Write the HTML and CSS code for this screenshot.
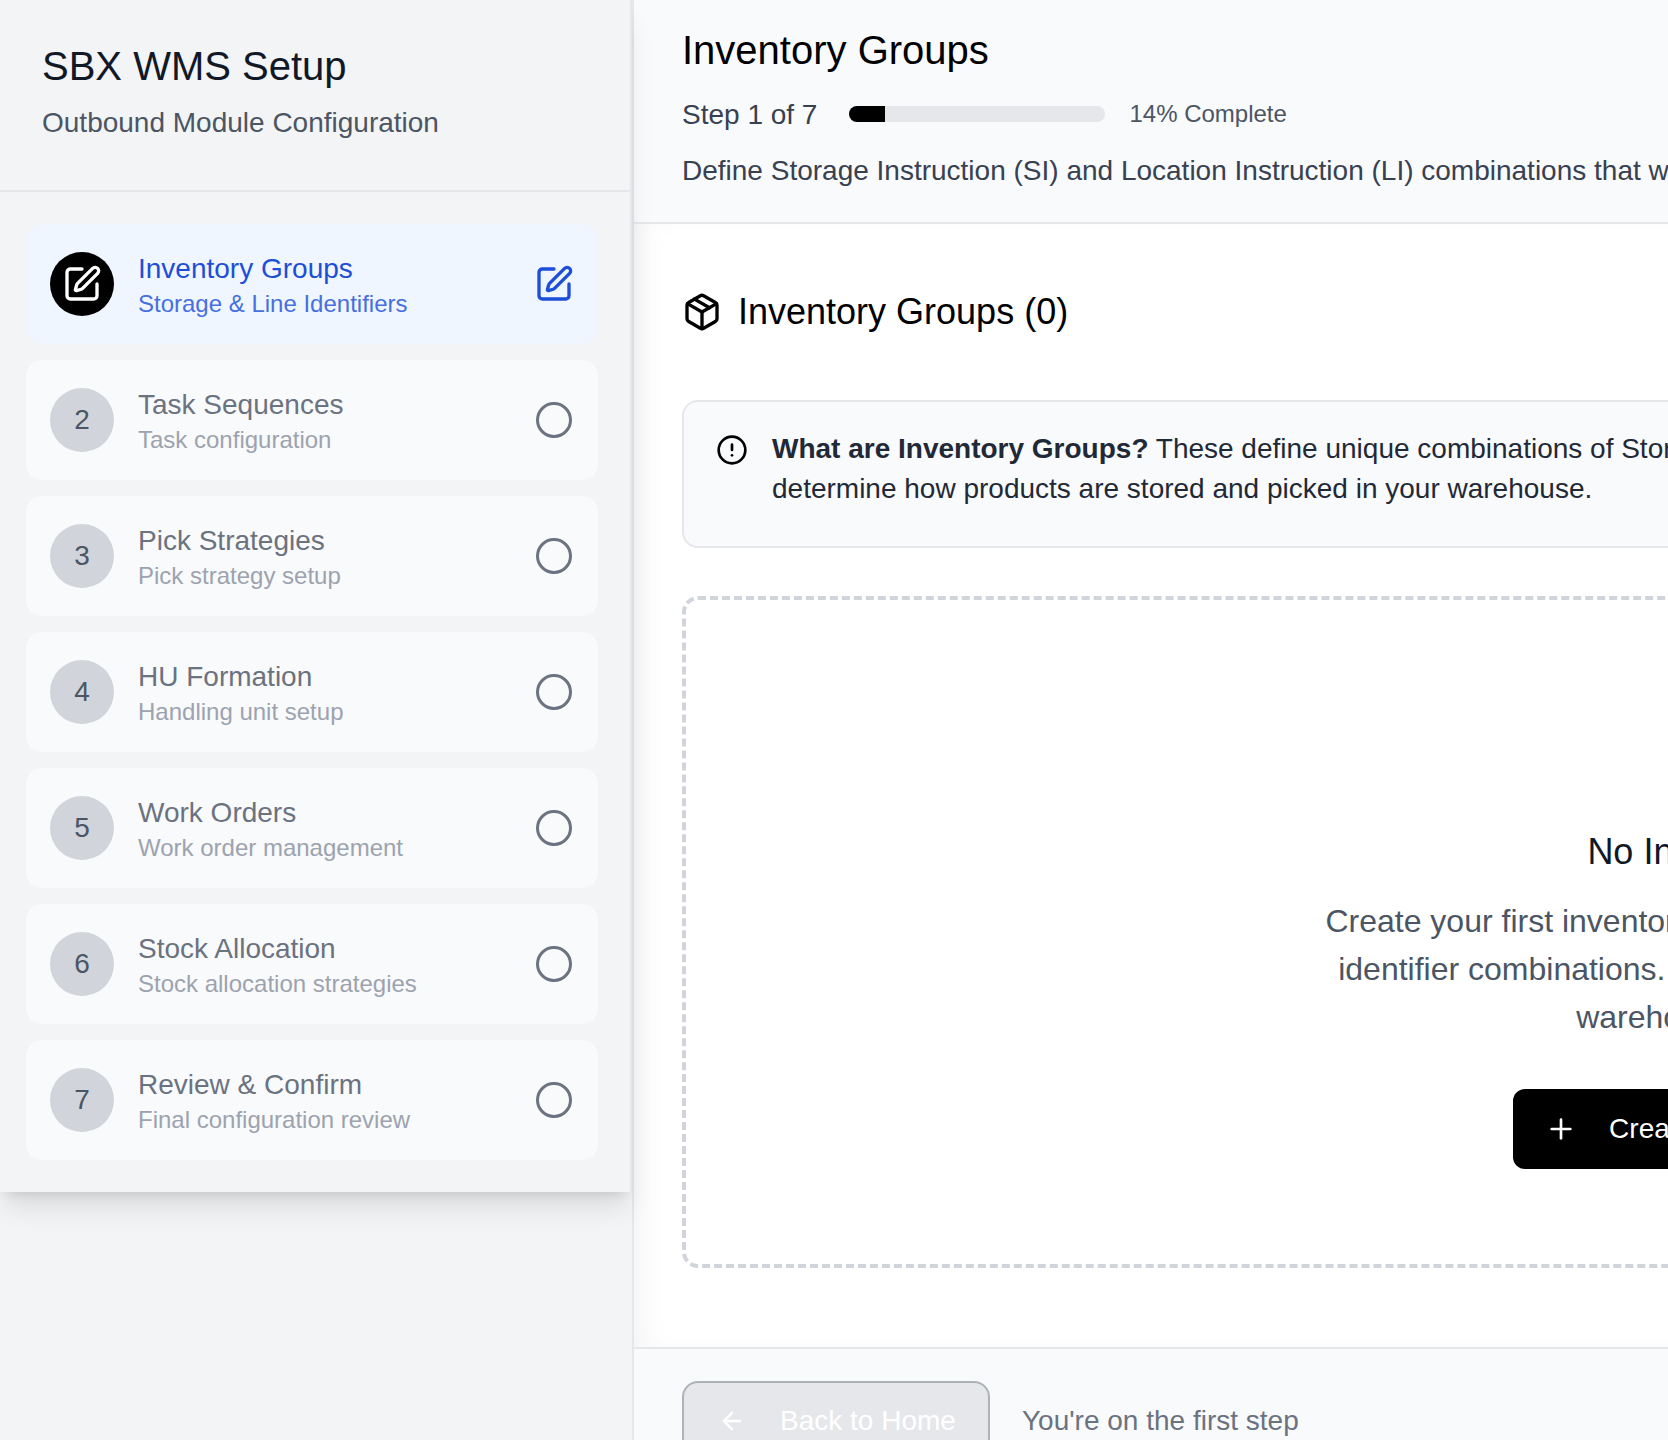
FILE: index.html
```html
<!DOCTYPE html>
<html lang="en">
<head>
<meta charset="utf-8">
<title>SBX WMS Setup</title>
<link rel="stylesheet" href="styles.css">
</head>
<body>
<div class="shell">
  <aside class="rail">
    <div class="sidebar">
      <header class="brand">
        <h1>SBX WMS Setup</h1>
        <p>Outbound Module Configuration</p>
      </header>
      <nav class="steps">
        <div class="step active">
          <span class="badge"><svg class="edit-sm" viewBox="0 0 24 24"><path d="M12 3H5a2 2 0 0 0-2 2v14a2 2 0 0 0 2 2h14a2 2 0 0 0 2-2v-7"/><path d="M18.375 2.625a1 1 0 0 1 3 3l-9.013 9.014a2 2 0 0 1-.853.505l-2.873.84a.5.5 0 0 1-.62-.62l.84-2.873a2 2 0 0 1 .506-.852z"/></svg></span>
          <div class="copy"><div class="name">Inventory Groups</div><div class="sub">Storage &amp; Line Identifiers</div></div>
          <svg class="state" viewBox="0 0 24 24"><path d="M12 3H5a2 2 0 0 0-2 2v14a2 2 0 0 0 2 2h14a2 2 0 0 0 2-2v-7"/><path d="M18.375 2.625a1 1 0 0 1 3 3l-9.013 9.014a2 2 0 0 1-.853.505l-2.873.84a.5.5 0 0 1-.62-.62l.84-2.873a2 2 0 0 1 .506-.852z"/></svg>
        </div>
        <div class="step">
          <span class="badge">2</span>
          <div class="copy"><div class="name">Task Sequences</div><div class="sub">Task configuration</div></div>
          <span class="ring"></span>
        </div>
        <div class="step">
          <span class="badge">3</span>
          <div class="copy"><div class="name">Pick Strategies</div><div class="sub">Pick strategy setup</div></div>
          <span class="ring"></span>
        </div>
        <div class="step">
          <span class="badge">4</span>
          <div class="copy"><div class="name">HU Formation</div><div class="sub">Handling unit setup</div></div>
          <span class="ring"></span>
        </div>
        <div class="step">
          <span class="badge">5</span>
          <div class="copy"><div class="name">Work Orders</div><div class="sub">Work order management</div></div>
          <span class="ring"></span>
        </div>
        <div class="step">
          <span class="badge">6</span>
          <div class="copy"><div class="name">Stock Allocation</div><div class="sub">Stock allocation strategies</div></div>
          <span class="ring"></span>
        </div>
        <div class="step">
          <span class="badge">7</span>
          <div class="copy"><div class="name">Review &amp; Confirm</div><div class="sub">Final configuration review</div></div>
          <span class="ring"></span>
        </div>
      </nav>
    </div>
  </aside>
  <main class="main">
    <header class="top">
      <h2>Inventory Groups</h2>
      <div class="progress-row">
        <span class="step-label">Step 1 of 7</span>
        <span class="track"><span class="fill"></span></span>
        <span class="pct">14% Complete</span>
      </div>
      <p class="desc">Define Storage Instruction (SI) and Location Instruction (LI) combinations that will be used across your warehouse configuration.</p>
    </header>
    <section class="body">
      <div class="section-head">
        <svg class="box" viewBox="0 0 24 24"><path d="M11 21.730a2 2 0 0 0 2 0l7-4A2 2 0 0 0 21 16V8a2 2 0 0 0-1-1.730l-7-4a2 2 0 0 0-2 0l-7 4A2 2 0 0 0 3 8v8a2 2 0 0 0 1 1.730z"/><path d="M12 22V12"/><path d="M3.290 7 12 12l8.710-5"/><path d="m7.500 4.270 9 5.150"/></svg>
        <h3>Inventory Groups (0)</h3>
      </div>
      <div class="info">
        <svg class="alert" viewBox="0 0 24 24"><circle cx="12" cy="12" r="10"/><path d="M12 8v4"/><path d="M12 16h.01"/></svg>
        <p><strong>What are Inventory Groups?</strong> These define unique combinations of Storage Instructions (SI) and Location Instructions (LI) that<br>determine how products are stored and picked in your warehouse.</p>
      </div>
      <div class="empty">
        <h4>No Inventory Groups Yet</h4>
        <p>Create your first inventory group to define Storage and location<br>identifier combinations. These determine how products live in<br>warehouse operations now.</p>
        <button class="create" type="button"><svg class="plus" viewBox="0 0 24 24"><path d="M12 5v14"/><path d="M5 12h14"/></svg>Create First Inventory Group</button>
      </div>
    </section>
    <footer class="foot">
      <button class="back" type="button" disabled><svg class="arrow" viewBox="0 0 24 24"><path d="M19 12H5"/><path d="M12 19l-7-7 7-7"/></svg>Back to Home</button>
      <span class="hint">You're on the first step</span>
    </footer>
  </main>
</div>
</body>
</html>
```
FILE: styles.css
```css
* { box-sizing: border-box; }
html, body { margin: 0; height: 1440px; overflow: hidden; }
body { font-family: "Liberation Sans", Arial, sans-serif; background: #f3f4f6; color: #111827; }
h1, h2, h3, h4, p { margin: 0; font-weight: 400; }
.shell { display: flex; width: 2908px; height: 1472px; }

.rail { flex: 0 0 634px; background: #f3f4f6; border-right: 2px solid #e5e7eb; position: relative; z-index: 1; }
.sidebar { width: 632px; height: 1192px; background: #f3f4f6; box-shadow: 0 20px 25px -5px rgba(0,0,0,.1), 0 8px 10px -6px rgba(0,0,0,.1); border-right: 2px solid #e5e7eb; }
.brand { height: 192px; padding: 42px 42px 0; border-bottom: 2px solid #e5e7eb; }
.brand h1 { font-size: 40px; line-height: 48px; color: #111827; }
.brand p { margin-top: 12px; font-size: 28px; line-height: 42px; color: #4b5563; }

.steps { display: flex; flex-direction: column; gap: 16px; padding: 32px 32px 0 26px; }
.step { display: flex; align-items: center; height: 120px; padding: 0 26px 0 24px; border-radius: 16px; background: #f9fafb; }
.step.active { background: #eff6ff; }
.badge { flex: 0 0 64px; height: 64px; border-radius: 50%; background: #d1d5db; color: #4b5563; font-size: 28px; display: flex; align-items: center; justify-content: center; }
.active .badge { background: #000; }
.copy { flex: 1; margin-left: 24px; margin-top: 3px; }
.name { font-size: 28px; line-height: 36px; color: #6b7280; }
.sub { font-size: 24px; line-height: 32px; margin-top: 1px; color: #9ca3af; }
.active .name { color: #1d4ed8; }
.active .sub { color: #476fe0; }
.ring { flex: 0 0 36px; height: 36px; border-radius: 50%; border: 3px solid #6b7280; }
.state { width: 40px; height: 40px; margin-right: -2px; fill: none; stroke: #1d4ed8; stroke-width: 2; stroke-linecap: round; stroke-linejoin: round; }
.edit-sm { width: 40px; height: 40px; fill: none; stroke: #fff; stroke-width: 2; stroke-linecap: round; stroke-linejoin: round; }

.main { flex: 0 0 2274px; display: flex; flex-direction: column; height: 1472px; background: #fff; }
.top { height: 224px; padding: 26px 48px 0; background: #f9fafb; border-bottom: 2px solid #e5e7eb; flex: none; }
.top h2 { font-size: 40px; line-height: 48px; color: #000; }
.progress-row { display: flex; align-items: center; margin-top: 20px; }
.step-label { font-size: 28px; line-height: 42px; color: #374151; }
.track { width: 256px; height: 16px; margin-left: 32px; margin-top: -2px; background: #e5e7eb; border-radius: 8px; overflow: hidden; }
.fill { display: block; width: 14%; height: 100%; background: #000; }
.pct { margin-left: 24px; margin-top: -2px; font-size: 24px; color: #4b5563; }
.desc { margin-top: 14px; font-size: 28px; line-height: 42px; color: #374151; white-space: nowrap; }

.body { flex: 1; padding: 62px 48px 0; box-shadow: inset 20px 0 36px -20px rgba(0,0,0,.07); }
.section-head { display: flex; align-items: center; gap: 16px; height: 52px; }
.section-head h3 { font-size: 36px; line-height: 52px; color: #000; }
.box { width: 40px; height: 40px; fill: none; stroke: #000; stroke-width: 2; stroke-linecap: round; stroke-linejoin: round; }
.info { display: flex; gap: 24px; margin-top: 62px; height: 148px; padding: 27px 32px; background: #f9fafb; border: 2px solid #e5e7eb; border-radius: 16px; }
.alert { flex: 0 0 32px; height: 32px; margin-top: 5px; fill: none; stroke: #000; stroke-width: 2; stroke-linecap: round; stroke-linejoin: round; }
.info p { font-size: 28px; line-height: 40px; color: #1f2937; white-space: nowrap; }
.info strong { font-weight: 700; }
.empty { display: flex; flex-direction: column; align-items: center; justify-content: flex-end; margin-top: 48px; height: 672px; padding-bottom: 95px; border: 4px dashed #d1d5db; border-radius: 16px; }
.empty h4 { font-size: 36px; line-height: 48px; color: #111827; padding-left: 25px; }
.empty p { margin-top: 21px; font-size: 32px; line-height: 48px; color: #4b5563; text-align: center; }
.create { display: flex; align-items: center; height: 80px; margin-top: 48px; padding: 0 65px 0 32px; background: #000; color: #fff; border: 0; border-radius: 12px; font: inherit; font-size: 28px; white-space: nowrap; }
.plus { width: 32px; height: 32px; margin-right: 32px; fill: none; stroke: #fff; stroke-width: 2; stroke-linecap: round; }

.foot { display: flex; align-items: flex-start; gap: 32px; height: 125px; padding: 32px 48px 0; background: #f9fafb; border-top: 2px solid #e5e7eb; flex: none; }
.back { display: flex; align-items: center; width: 308px; height: 80px; padding: 0 0 0 34px; background: #e5e7eb; color: #fff; border: 2px solid #adb2b9; border-radius: 16px; font: inherit; font-size: 28px; white-space: nowrap; }
.arrow { width: 28px; height: 28px; margin-right: 34px; fill: none; stroke: #fff; stroke-width: 2; stroke-linecap: round; stroke-linejoin: round; }
.hint { font-size: 28px; line-height: 80px; color: #6b7280; }
```
